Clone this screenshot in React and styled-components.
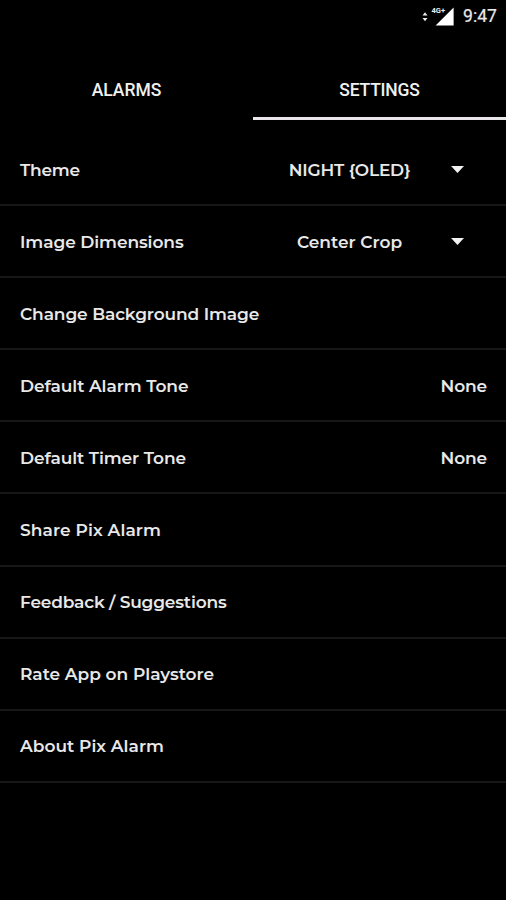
import React from 'react';
import styled, { createGlobalStyle } from 'styled-components';

const GlobalStyle = createGlobalStyle`
  * { box-sizing: border-box; }
  body { margin: 0; background: #000; }
`;

const Screen = styled.div`
  width: 506px;
  height: 900px;
  overflow: hidden;
  background: #000;
  color: #e8e8e8;
  font-family: Roboto, sans-serif;
`;

const StatusBar = styled.header`
  display: flex;
  justify-content: flex-end;
  align-items: center;
  height: 32px;
  padding-right: 9px;
`;

const SignalIcon = styled.svg`
  display: block;
  width: 32px;
  height: 20px;
  margin: -1px 9px 0 0;
`;

const Clock = styled.time`
  width: 34px;
  font-size: 17.6px;
  line-height: 32px;
  white-space: nowrap;
  -webkit-text-stroke: 0.2px currentColor;
`;

const Tabs = styled.nav`
  display: grid;
  grid-template-columns: 253px 253px;
  height: 88px;
  padding-top: 28px;
`;

const Tab = styled.button`
  height: 60px;
  padding: 2px 0 0;
  border: 0;
  border-bottom: 3px solid ${(p) => (p.$active ? '#e9e6e9' : 'transparent')};
  background: none;
  color: #f0f0f0;
  font: 500 17.5px Roboto, sans-serif;
  letter-spacing: ${(p) => p.$tracking || 0}px;
`;

const List = styled.main`
  padding-top: 14px;
`;

const Row = styled.div`
  display: flex;
  align-items: center;
  justify-content: space-between;
  height: 72.1px;
  padding: 1px 19px 0 20px;
  border-bottom: 2px solid #171717;
`;

const Label = styled.span`
  font: 600 17px/24px Montserrat, Inter, sans-serif;
  letter-spacing: ${(p) => p.$tracking || 0}px;
  white-space: nowrap;
`;

const Select = styled.div`
  display: flex;
  align-items: center;
  width: 211px;
`;

const Choice = styled.div`
  width: 147px;
  text-align: center;
`;

const Caret = styled.svg`
  width: 13px;
  height: 7px;
  margin-left: 28px;
  fill: #f2f2f2;
`;

const settings = [
  { label: 'Theme', choice: 'NIGHT {OLED}', tracking: -0.25, choiceTracking: -0.18 },
  { label: 'Image Dimensions', choice: 'Center Crop', tracking: -0.08 },
  { label: 'Change Background Image', tracking: -0.11 },
  { label: 'Default Alarm Tone', value: 'None', tracking: -0.06 },
  { label: 'Default Timer Tone', value: 'None', tracking: -0.08 },
  { label: 'Share Pix Alarm', tracking: 0.1 },
  { label: 'Feedback / Suggestions', tracking: -0.17 },
  { label: 'Rate App on Playstore' },
  { label: 'About Pix Alarm', tracking: 0.03 },
];

export default function App() {
  return (
    <Screen>
      <GlobalStyle />
      <StatusBar>
        <SignalIcon viewBox="0 0 32 20" fill="#eee">
          <path d="M.5 9.5 3 6.2 5.5 9.5ZM.5 12H5.5L3 15.3Z" />
          <text x="9.5" y="7.2" fontFamily="Roboto" fontWeight="700" fontSize="8" textLength="13.5" lengthAdjust="spacingAndGlyphs">4G+</text>
          <path fill="#fff" d="M31.6 1.5V19.5H13.6Z" />
        </SignalIcon>
        <Clock>9:47</Clock>
      </StatusBar>
      <Tabs>
        <Tab>ALARMS</Tab>
        <Tab $active $tracking={-0.2}>SETTINGS</Tab>
      </Tabs>
      <List>
        {settings.map((s) => (
          <Row key={s.label}>
            <Label $tracking={s.tracking}>{s.label}</Label>
            {s.value && <Label $tracking={-0.15}>{s.value}</Label>}
            {s.choice && (
              <Select>
                <Choice><Label $tracking={s.choiceTracking}>{s.choice}</Label></Choice>
                <Caret viewBox="0 0 13 7"><path d="M0 0H13L6.5 7Z" /></Caret>
              </Select>
            )}
          </Row>
        ))}
      </List>
    </Screen>
  );
}
